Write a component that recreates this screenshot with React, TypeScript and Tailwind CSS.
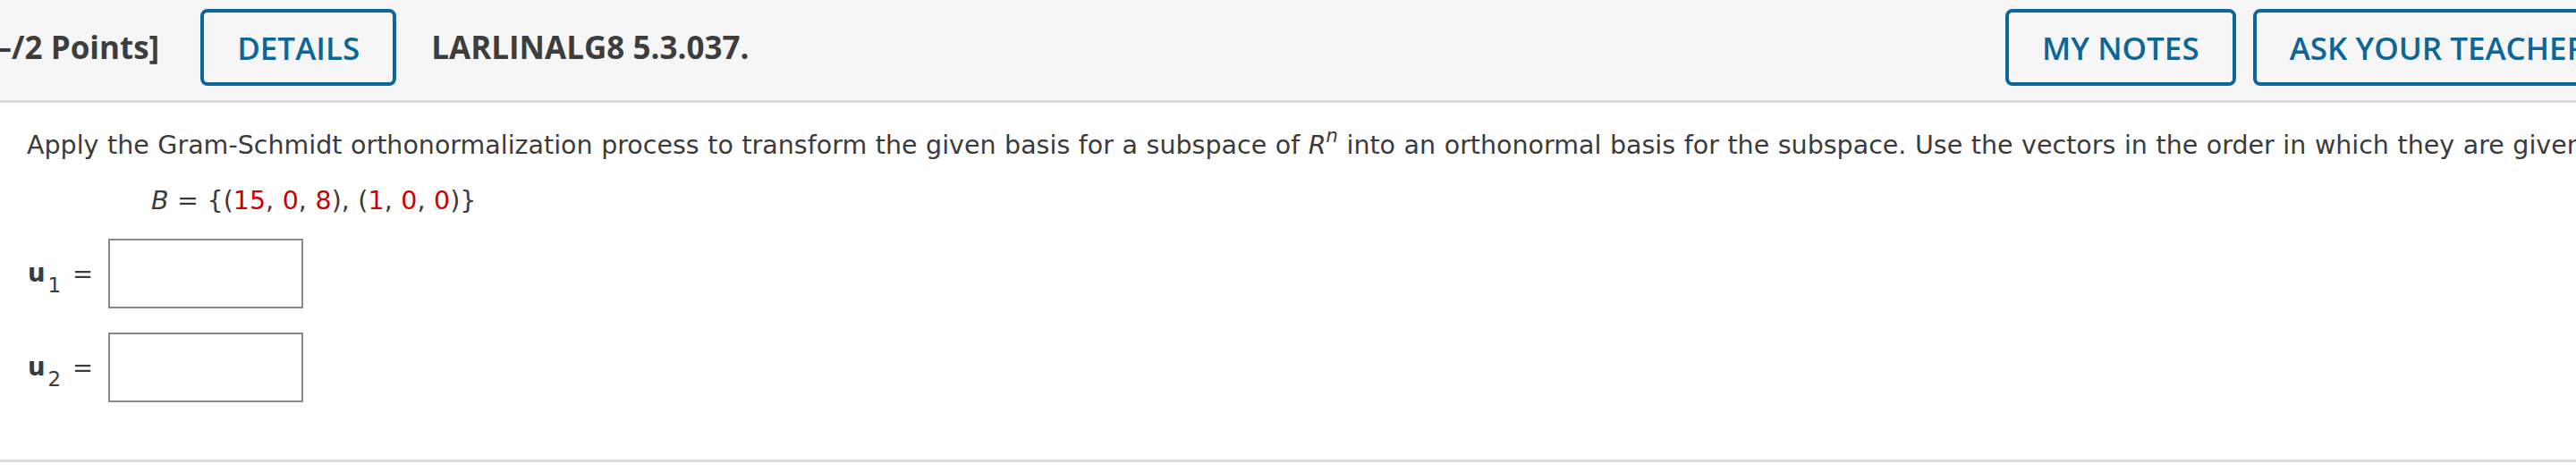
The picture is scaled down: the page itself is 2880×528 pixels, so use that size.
import React from "react";

const blueBtn =
  "h-[86px] shrink-0 rounded-[8px] border-[4px] border-[#0b6699] bg-transparent px-[37px] text-[35px] font-semibold leading-none text-[#0b6699]";

function AnswerRow({ sub }: { sub: string }) {
  return (
    <div className="flex items-center">
      <span className="w-[51px] pl-[1px]">
        <span className="font-bold">u</span>
        <span className="relative top-[12px] ml-[3px] text-[23px]">{sub}</span>
      </span>
      <span>=</span>
      <div className="ml-[17px] h-[78px] w-[218px] border-2 border-[#8a8a8a] bg-white" />
    </div>
  );
}

export default function App() {
  return (
    <div className="min-h-[528px] w-full overflow-hidden bg-white">
      {/* question header */}
      <div className="overflow-hidden border-b-[3px] border-[#dcdcdc] bg-[#f6f6f6]">
        <div className="ml-[-16px] flex h-[112px] w-[2949px] items-start justify-between whitespace-nowrap pt-[10px] font-['Open_Sans',sans-serif]">
          <div className="flex h-[86px] items-center">
            <span className="text-[35px] font-bold text-[#3d3d3d]">[–/2 Points]</span>
            <button className={`${blueBtn} ml-[46px]`}>DETAILS</button>
            <span className="ml-[39px] text-[35px] font-bold text-[#3d3d3d]">LARLINALG8 5.3.037.</span>
          </div>
          <div className="flex gap-[19px]">
            <button className={blueBtn}>MY NOTES</button>
            <button className={blueBtn}>ASK YOUR TEACHER</button>
          </div>
        </div>
      </div>

      {/* question body */}
      <div className="border-b-[3px] border-[#dcdcdc] pb-[64px] pl-[30px] pt-[27px] whitespace-nowrap font-['DejaVu_Sans',Verdana,sans-serif] text-[28.5px] leading-[41px] text-[#3b3b3b] [word-spacing:0.5px]">
        <p>
          Apply the Gram-Schmidt orthonormalization process to transform the given basis for a subspace of{" "}
          <i>R</i>
          <span className="relative -top-[13px] text-[21px] italic">n</span> into an orthonormal basis for the
          subspace. Use the vectors in the order in which they are given.
        </p>
        <p className="mt-[18px] pl-[139px]">
          <i>B</i> = {"{("}
          <span className="text-[#cc0000]">15</span>, <span className="text-[#cc0000]">0</span>,{" "}
          <span className="text-[#cc0000]">8</span>), (<span className="text-[#cc0000]">1</span>,{" "}
          <span className="text-[#cc0000]">0</span>, <span className="text-[#cc0000]">0</span>
          {")}"}
        </p>
        <div className="mt-[22px] flex flex-col gap-[27px] text-[27.5px]">
          <AnswerRow sub="1" />
          <AnswerRow sub="2" />
        </div>
      </div>
    </div>
  );
}
